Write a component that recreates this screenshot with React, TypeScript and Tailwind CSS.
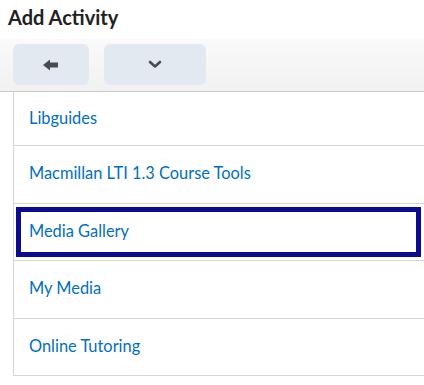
const items = [
    "Libguides",
    "Macmillan LTI 1.3 Course Tools",
    "Media Gallery",
    "My Media",
    "Online Tutoring"
];

const ArrowLeft = () => (
    <svg width="16" height="12" viewBox="0 0 16 12" fill="#494c4e">
        <path d="M0 6 L7 0.5 L7 3.5 L15 3.5 L15 8.5 L7 8.5 L7 11.5 Z" />
    </svg>
);

const ChevronDown = () => (
    <svg width="14" height="9" viewBox="0 0 14 9" fill="none">
        <path
            d="M2 2 L7 6.5 L12 2"
            stroke="#494c4e"
            strokeWidth="2.6"
            strokeLinecap="round"
            strokeLinejoin="round"
        />
    </svg>
);

export default function App() {
    return (
        <div
            className="w-[424px] h-[385px] overflow-hidden bg-white"
            style={{ fontFamily: "Lato, 'Noto Sans', sans-serif" }}
        >
            {/* title */}
            <div className="h-[39px] pl-[8px] pt-[4px] text-[20px] font-bold leading-[27px] text-[#202122]">
                Add Activity
            </div>

            {/* toolbar */}
            <div className="h-[53px] border-b border-[#c9c9c9] bg-gradient-to-b from-[#fafafa] to-[#f1f1f1] pl-[13px] pt-[5px] flex gap-[15px]">
                <button className="w-[76px] h-[41px] rounded-[6px] bg-[#e3e9f1] flex items-center justify-center">
                    <ArrowLeft />
                </button>
                <button className="w-[102px] h-[41px] rounded-[6px] bg-[#e3e9f1] flex items-center justify-center">
                    <ChevronDown />
                </button>
            </div>

            {/* list */}
            <div className="ml-[13px] border-l border-[#d3d6da]">
                {items.map((item, i) => {
                    const focused = item === "Media Gallery";
                    return (
                        <div
                            key={item}
                            className={`border-b border-[#d3d6da] ${
                                i === 0 ? "h-[54px]" : "h-[57.5px]"
                            } ${focused ? "pt-[3px] pb-[3px] pl-[2px] pr-[3px]" : ""}`}
                        >
                            {focused ? (
                                <div className="h-full border-[5px] border-[#0c0a8e] pl-[8px] pb-[1px] flex items-center text-[16.4px] text-[#006fbf]">
                                    {item}
                                </div>
                            ) : (
                                <div className="h-full pl-[15px] pb-[1px] flex items-center text-[16.4px] text-[#006fbf]">
                                    {item}
                                </div>
                            )}
                        </div>
                    );
                })}
            </div>
        </div>
    );
}
